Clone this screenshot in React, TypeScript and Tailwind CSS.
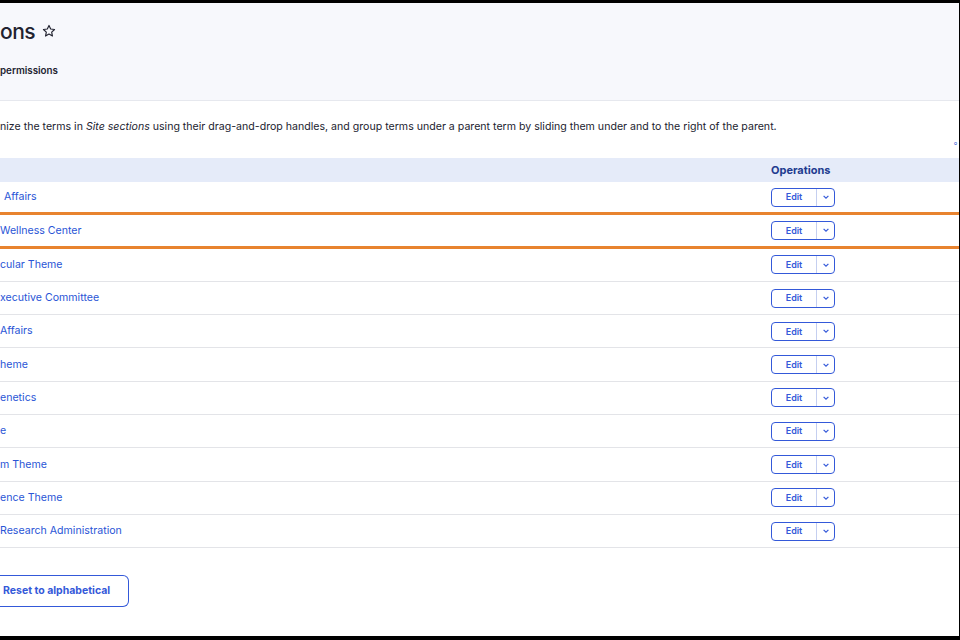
import React from "react";

const rows = [
  "Affairs",
  "Wellness Center",
  "cular Theme",
  "xecutive Committee",
  "Affairs",
  "heme",
  "enetics",
  "e",
  "m Theme",
  "ence Theme",
  "Research Administration",
];
const pads = ["pl-[4px]", "pl-0", "pl-0", "pl-0", "pl-0", "pl-0", "pl-0", "pl-0", "pl-0", "pl-0", "pl-0"];

export default function App() {
  return (
    <div className="w-[960px] h-[640px] bg-white overflow-hidden flex flex-col border-t-[3px] border-b-[4px] border-r border-black" style={{ fontFamily: "Inter, 'Noto Sans', sans-serif" }}>
      <div className="h-[98px] bg-[#f7f8fc] border-b border-[#e6e8ee] flex flex-col">
        <div className="h-[56px] flex items-center gap-[7px]">
          <span className="text-[21px] font-medium text-[#222330] tracking-tight leading-none">ons</span>
          <svg width="14" height="14" viewBox="0 0 24 24" fill="none" stroke="#222330" strokeWidth="2" strokeLinejoin="round"><path d="M12 2.5l2.9 6.1 6.6.8-4.9 4.6 1.3 6.6L12 17.3 6.1 20.6l1.3-6.6-4.9-4.6 6.6-.8z"/></svg>
        </div>
        <div className="text-[9.8px] font-semibold text-[#222330] mt-[5px]">permissions</div>
      </div>
      <div className="text-[10.6px] text-[#222330] mt-[18px] leading-[16px]">
        nize the terms in <i>Site sections</i> using their drag-and-drop handles, and group terms under a parent term by sliding them under and to the right of the parent.
      </div>
      <div className="h-[23px] flex justify-end items-start"><span className="text-[#3b5fd9] text-[9px] leading-[12px] mr-[1px] mt-[2px]">◦</span></div>
      <div className="h-[24px] bg-[#e5ebf9] flex items-center">
        <div className="ml-[771px] text-[11px] font-bold text-[#213a8f]">Operations</div>
      </div>
      {rows.map((r, i) => {
        const orange = i === 0 || i === 1;
        return (
          <div key={i} className={`h-[33.3px] flex items-center border-b ${orange ? "border-b-[3px] border-[#e8832f]" : "border-[#e3e4e8]"}`}>
            <div className={`w-[771px] text-[10.6px] text-[#2a55d6] ${pads[i]}`}>{r}</div>
            <div className="w-[64px] h-[19px] border-[1.5px] border-[#3459d9] rounded-[4px] flex items-center">
              <span className="flex-1 text-center text-[9px] font-semibold text-[#3459d9]">Edit</span>
              <span className="w-[18px] h-full border-l border-[#c5cff0] flex items-center justify-center">
                <svg width="8" height="8" viewBox="0 0 10 10" fill="none" stroke="#3459d9" strokeWidth="1.5"><path d="M2 3.5l3 3 3-3"/></svg>
              </span>
            </div>
          </div>
        );
      })}
      <div className="mt-[27px] w-[129px] h-[32px] border-[1.5px] border-l-0 border-[#3459d9] rounded-r-[6px] flex items-center pl-[3px]">
        <span className="text-[10.5px] font-bold text-[#3459d9]">Reset to alphabetical</span>
      </div>
    </div>
  );
}
